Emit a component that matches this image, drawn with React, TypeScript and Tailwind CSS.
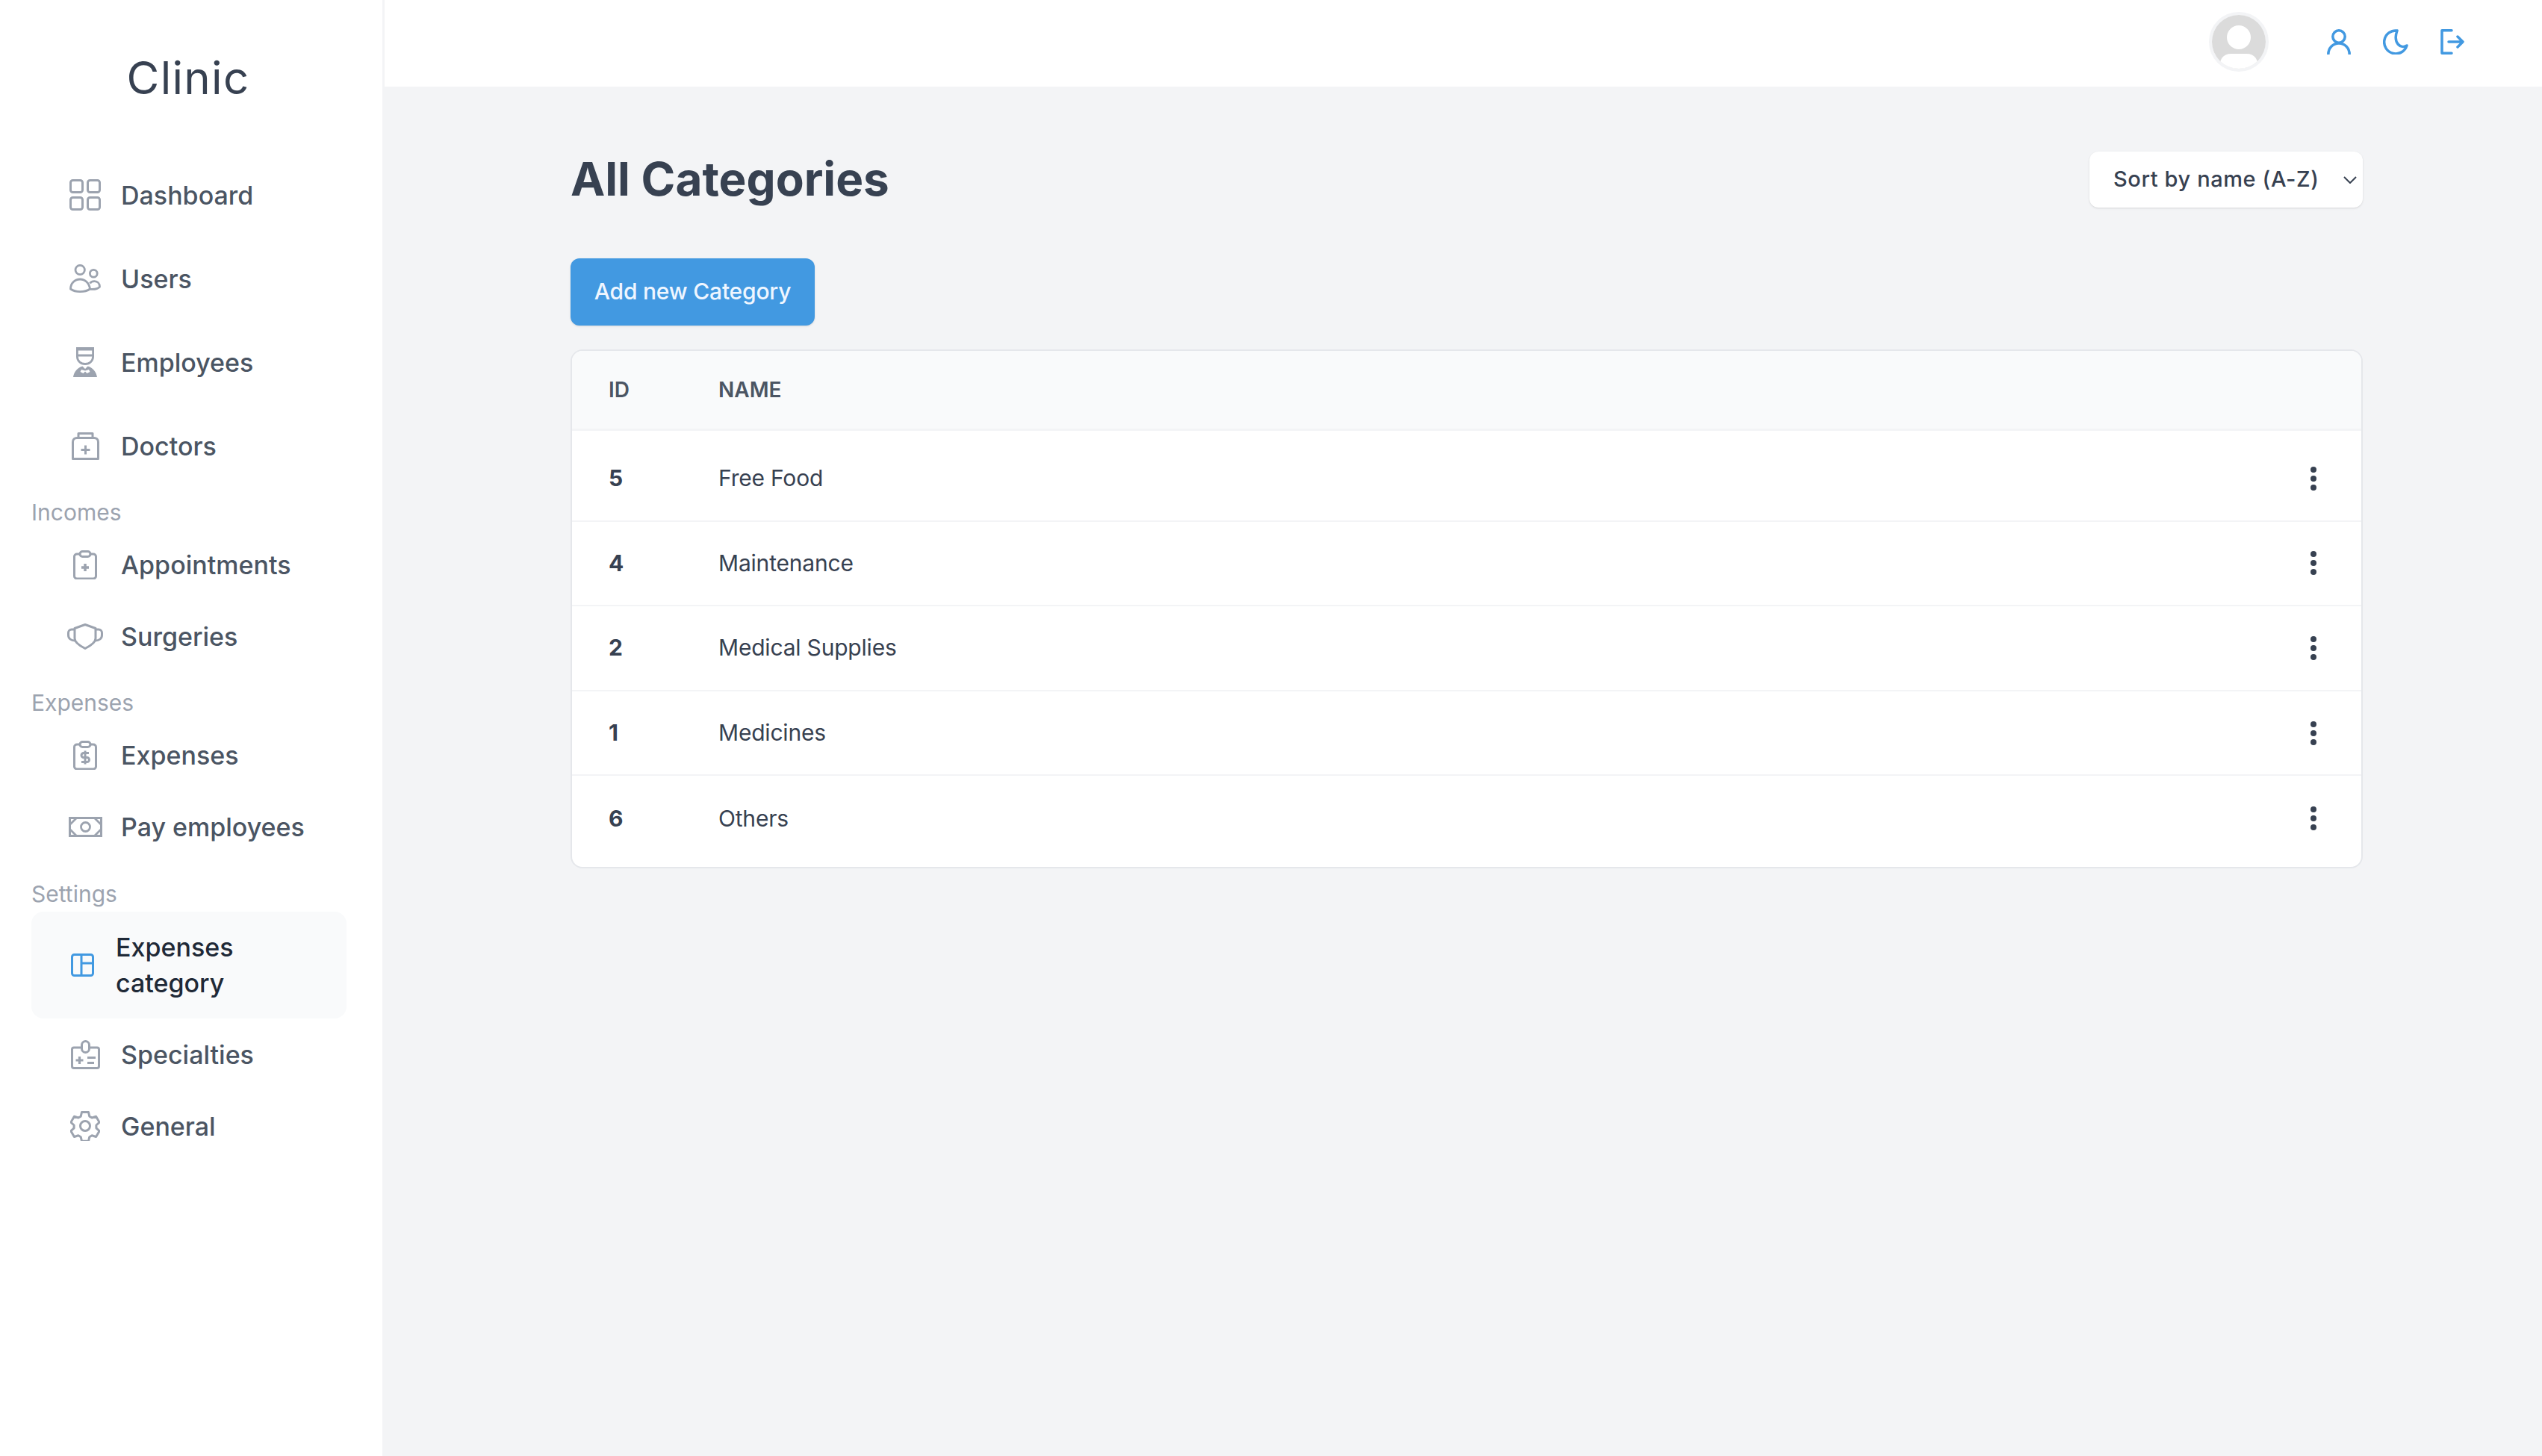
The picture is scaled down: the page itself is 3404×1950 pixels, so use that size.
import React from 'react';

type IconProps = { className?: string };

const GridIcon = ({ className }: IconProps) => (
  <svg viewBox="0 0 42 42" fill="none" stroke="currentColor" strokeWidth="3" className={className}>
    <rect x="1.500" y="1.500" width="16" height="16" rx="3" />
    <rect x="24.500" y="1.500" width="16" height="16" rx="3" />
    <rect x="1.500" y="24.500" width="16" height="16" rx="3" />
    <rect x="24.500" y="24.500" width="16" height="16" rx="3" />
  </svg>
);

const UsersIcon = ({ className }: IconProps) => (
  <svg viewBox="0 0 42 38" fill="none" stroke="currentColor" strokeWidth="2.800" strokeLinejoin="round" className={className}>
    <circle cx="14.200" cy="7.500" r="6.200" />
    <circle cx="32.300" cy="12.200" r="4.900" />
    <path d="M1.500 33c0-8 6-13 12.700-13S26.500 25 27.500 33c-3.500 2.500-8 3.600-13.300 3.600S5 35.500 1.500 33z" />
    <path d="M27.500 25.500c1-1.800 3.500-2.800 6-2.800 4 0 7 3 7 7.500-2.500 2.500-7.500 3.600-13 3" />
  </svg>
);

const NurseIcon = ({ className }: IconProps) => (
  <svg viewBox="0 0 32 40" className={className}>
    <path fill="currentColor" d="M4 0h24v4.500H4zM4 9.500h24v3H4z" />
    <path fill="none" stroke="currentColor" strokeWidth="2.800" d="M5.400 3v9.500c0 5.800 4.700 10 10.600 10s10.600-4.200 10.600-10V3" />
    <path fill="currentColor" d="M0 40c1-7 6-13 12.500-14.500L16 29l3.500-3.500C26 27 31 33 32 40zM9.500 33l4 2 2.500-2.500 2.500 2.500 4-2-1.500-3-5 1.500-5-1.500z" />
  </svg>
);

const BagIcon = ({ className }: IconProps) => (
  <svg viewBox="0 0 37 37" fill="none" stroke="currentColor" strokeWidth="3" strokeLinejoin="round" className={className}>
    <path d="M9 7.500V1.500h19v6" />
    <path d="M1.500 13c0-3.500 2.500-5.500 5.500-5.500h23c3 0 5.500 2 5.500 5.500v22.500h-34z" />
    <path d="M18.500 17.500v12M12.500 23.500h12" />
  </svg>
);

const ClipboardBase = () => (
  <>
    <path d="M9 5H5a3.500 3.500 0 0 0-3.500 3.500v26A3.500 3.500 0 0 0 5 38h22a3.500 3.500 0 0 0 3.500-3.500v-26A3.500 3.500 0 0 0 27 5h-4" />
    <rect x="9" y="1.500" width="14" height="7" rx="3.500" />
  </>
);

const ClipboardPlusIcon = ({ className }: IconProps) => (
  <svg viewBox="0 0 32 39" fill="none" stroke="currentColor" strokeWidth="3" strokeLinejoin="round" className={className}>
    <ClipboardBase />
    <path strokeWidth="3.500" d="M16 18v10M11 23h10" />
  </svg>
);

const MaskIcon = ({ className }: IconProps) => (
  <svg viewBox="0 0 48 35" fill="none" stroke="currentColor" strokeWidth="3" strokeLinejoin="round" className={className}>
    <path d="M10 6.500L24 1.500l14 5v13.500c0 5-7 10-14 13.500-7-3.500-14-8.500-14-13.500z" />
    <path d="M10 8H6a4.500 4.500 0 0 0-4.500 4.500v3C1.500 20 5 23 10.500 23" />
    <path d="M38 8h4a4.500 4.500 0 0 1 4.500 4.500v3c0 4.500-3.500 7.500-9 7.500" />
  </svg>
);

const ClipboardDollarIcon = ({ className }: IconProps) => (
  <svg viewBox="0 0 32 39" fill="none" stroke="currentColor" strokeWidth="3" strokeLinejoin="round" className={className}>
    <ClipboardBase />
    <path d="M21 16.500h-7a3 3 0 0 0 0 6h4.500a3 3 0 0 1 0 6H11M16 13.500v18" />
  </svg>
);

const MoneyIcon = ({ className }: IconProps) => (
  <svg viewBox="0 0 45 27" className={className}>
    <rect x="1.500" y="1.500" width="42" height="24" fill="none" stroke="currentColor" strokeWidth="3" />
    <circle cx="22.500" cy="13.500" r="6" fill="none" stroke="currentColor" strokeWidth="2.800" />
    <path fill="none" stroke="currentColor" strokeWidth="2.800" d="M10 2L2 10M35 2l8 8M10 25l-8-8M35 25l8-8" />
  </svg>
);

const LayoutIcon = ({ className }: IconProps) => (
  <svg viewBox="0 0 31 31" fill="none" stroke="currentColor" strokeWidth="3" className={className}>
    <rect x="1.500" y="1.500" width="28" height="28" rx="3" />
    <path d="M14 1.500v28M14 13h15.500" />
  </svg>
);

const BadgeIcon = ({ className }: IconProps) => (
  <svg viewBox="0 0 39 39" fill="none" stroke="currentColor" strokeWidth="3" strokeLinejoin="round" className={className}>
    <path d="M14.500 10H4A2.500 2.500 0 0 0 1.500 12.500V35A2.500 2.500 0 0 0 4 37.500h31A2.500 2.500 0 0 0 37.500 35V12.500A2.500 2.500 0 0 0 35 10H24.500" />
    <rect x="14.500" y="1.500" width="10" height="15" rx="5" />
    <path strokeWidth="3.200" d="M11.500 22v10M6.500 27h10M22 23.500h11M22 30.500h9" />
  </svg>
);

const GearIcon = ({ className }: IconProps) => (
  <svg viewBox="0 0 40 40" fill="none" stroke="currentColor" strokeWidth="3" strokeLinejoin="round" className={className}>
    <path d="M15.500 1.500h9l1.300 5.600 3.300 1.900 5.500-1.700 4.500 7.800-4.200 3.900v3.800l4.200 3.900-4.500 7.800-5.500-1.700-3.300 1.900-1.300 5.600h-9l-1.300-5.600-3.300-1.900-5.500 1.700-4.500-7.800 4.200-3.900v-3.800L.9 15.100l4.500-7.800 5.500 1.700 3.300-1.900z" />
    <circle cx="20" cy="20" r="6.500" />
  </svg>
);

type NavItem = { label: string; icon: React.FC<IconProps>; iconClass: string };

const topItems: NavItem[] = [
  { label: 'Dashboard', icon: GridIcon, iconClass: 'w-[42px] h-[42px]' },
  { label: 'Users', icon: UsersIcon, iconClass: 'w-[42px] h-[38px]' },
  { label: 'Employees', icon: NurseIcon, iconClass: 'w-[32px] h-[40px]' },
  { label: 'Doctors', icon: BagIcon, iconClass: 'w-[37px] h-[37px]' },
];

const incomeItems: NavItem[] = [
  { label: 'Appointments', icon: ClipboardPlusIcon, iconClass: 'w-[32px] h-[39px]' },
  { label: 'Surgeries', icon: MaskIcon, iconClass: 'w-[48px] h-[35px]' },
];

const expenseItems: NavItem[] = [
  { label: 'Expenses', icon: ClipboardDollarIcon, iconClass: 'w-[32px] h-[39px]' },
  { label: 'Pay employees', icon: MoneyIcon, iconClass: 'w-[45px] h-[27px]' },
];

const settingItems: NavItem[] = [
  { label: 'Specialties', icon: BadgeIcon, iconClass: 'w-[39px] h-[39px]' },
  { label: 'General', icon: GearIcon, iconClass: 'w-[40px] h-[40px]' },
];

const categories = [
  { id: 5, name: 'Free Food' },
  { id: 4, name: 'Maintenance' },
  { id: 2, name: 'Medical Supplies' },
  { id: 1, name: 'Medicines' },
  { id: 6, name: 'Others' },
];

const NavRow: React.FC<{ item: NavItem; height: string }> = ({ item, height }) => {
  const Icon = item.icon;
  return (
    <a className={`flex items-center pl-[74px] ${height}`}>
      <span className="flex w-[80px] justify-center text-[#9ca3af]">
        <Icon className={item.iconClass} />
      </span>
      <span className="ml-[8px] text-[34px] font-medium text-[#4b5563]">{item.label}</span>
    </a>
  );
};

const SectionLabel: React.FC<{ children: React.ReactNode }> = ({ children }) => (
  <div className="h-[46px] pl-[42px] text-[30px] leading-[48px] text-[#9ca3af]">{children}</div>
);

const Sidebar = () => (
  <aside className="flex w-[515px] shrink-0 flex-col border-r-[3px] border-[#f3f4f6] bg-white">
    <div className="flex h-[205px] justify-center pt-[68px] pr-[8px] text-[60px] leading-[72px] tracking-[1.3px] text-[#374151]">Clinic</div>
    <nav className="flex flex-col">
      {topItems.map((item) => (
        <NavRow key={item.label} item={item} height="h-[112px]" />
      ))}
      <div className="mt-[9px]">
        <SectionLabel>Incomes</SectionLabel>
      </div>
      {incomeItems.map((item) => (
        <NavRow key={item.label} item={item} height="h-[96px]" />
      ))}
      <div className="mt-[17px]">
        <SectionLabel>Expenses</SectionLabel>
      </div>
      {expenseItems.map((item) => (
        <NavRow key={item.label} item={item} height="h-[96px]" />
      ))}
      <div className="mt-[18px]">
        <SectionLabel>Settings</SectionLabel>
      </div>
      <a className="mt-[2px] ml-[42px] flex h-[143px] w-[422px] items-center rounded-[16px] bg-[#f9fafb] pl-[53px]">
        <LayoutIcon className="h-[31px] w-[31px] text-[#4299e1]" />
        <span className="ml-[29px] w-[220px] text-[34px] leading-[48px] font-medium text-[#1f2937]">Expenses category</span>
      </a>
      {settingItems.map((item) => (
        <NavRow key={item.label} item={item} height="h-[96px]" />
      ))}
    </nav>
  </aside>
);

const Avatar = () => (
  <div className="h-[80px] w-[80px] rounded-full border-[4px] border-[#f3f4f6]">
    <svg viewBox="0 0 72 72" className="h-full w-full">
      <defs>
        <clipPath id="avatar-clip">
          <circle cx="36" cy="36" r="36" />
        </clipPath>
      </defs>
      <g clipPath="url(#avatar-clip)">
        <rect width="72" height="72" fill="#dbdbdb" />
        <circle cx="36" cy="30" r="16" fill="#fff" />
        <path d="M10 72c0-12 4-20 16-20h20c12 0 16 8 16 20z" fill="#fff" />
      </g>
    </svg>
  </div>
);

const Header = () => (
  <header className="flex h-[116px] items-center justify-end bg-white pr-[104px] pb-[4px]">
    <Avatar />
    <div className="ml-[78px] flex items-center gap-[43px] text-[#4299e1]">
      <svg viewBox="0 0 32 34" fill="none" stroke="currentColor" strokeWidth="3.500" className="h-[34px] w-[32px]">
        <circle cx="16" cy="10" r="8.200" />
        <path d="M1.800 34c0-8.500 6.200-15 14.200-15s14.200 6.500 14.200 15" />
      </svg>
      <svg viewBox="0 0 34 34" fill="none" stroke="currentColor" strokeWidth="3.500" strokeLinejoin="round" className="h-[34px] w-[34px]">
        <path d="M19 2A15.500 15.500 0 1 0 32 22c-8 5-19-3-13-20z" />
      </svg>
      <svg viewBox="0 0 32 34" fill="none" stroke="currentColor" strokeWidth="3.500" strokeLinecap="round" strokeLinejoin="round" className="h-[34px] w-[32px]">
        <path d="M15 1.800H2v30.400h13" />
        <path d="M11 17h19M23 10l7 7-7 7" />
      </svg>
    </div>
  </header>
);

const DotsIcon = () => (
  <svg viewBox="0 0 8 32" className="h-[32px] w-[8px] text-[#374151]" fill="currentColor">
    <circle cx="4" cy="4" r="4" />
    <circle cx="4" cy="16" r="4" />
    <circle cx="4" cy="28" r="4" />
  </svg>
);

export default function App() {
  return (
    <div className="flex min-h-[1950px] bg-[#f3f4f6] font-['Inter','Liberation_Sans',sans-serif]">
      <Sidebar />
      <div className="flex min-w-0 flex-1 flex-col">
        <Header />
        <main className="pr-[240px] pl-[249px]">
          {/* Title + sort */}
          <div className="mt-[87px] flex h-[75px] items-center justify-between">
            <h1 className="mt-[-3px] text-[62px] font-bold text-[#374151]">All Categories</h1>
            <div className="flex h-[75px] w-[366px] items-center justify-between rounded-[12px] bg-white pr-[8px] pl-[32px] shadow-sm">
              <span className="pb-[2px] text-[29px] font-medium tracking-[0.6px] text-[#374151]">Sort by name (A-Z)</span>
              <svg viewBox="0 0 18 10" fill="none" stroke="#374151" strokeWidth="2" className="h-[10px] w-[18px]">
                <path d="M1 1l8 8 8-8" />
              </svg>
            </div>
          </div>

          <button className="mt-[68px] block h-[90px] w-[327px] rounded-[12px] bg-[#4299e1] pb-[2px] text-[30px] font-medium tracking-[-0.2px] text-[#eff6ff] shadow-sm">Add new Category</button>

          {/* Table */}
          <div className="mt-[32px] overflow-hidden rounded-[16px] border-[2px] border-[#e5e7eb] bg-white">
            <div className="flex h-[107px] items-center border-b-[3px] border-[#f3f4f6] bg-[#f9fafb] text-[28px] font-semibold text-[#4b5563]">
              <div className="w-[196px] pl-[49px]">ID</div>
              <div>NAME</div>
            </div>
            <div className="flex flex-col divide-y-[2px] divide-[#f3f4f6] py-[8px]">
              {categories.map((c) => (
                <div key={c.id} className="flex h-[113.6px] items-center text-[30px] text-[#374151]">
                  <div className="w-[196px] pl-[49px] font-bold">{c.id}</div>
                  <div className="flex-1 tracking-[-0.2px]">{c.name}</div>
                  <div className="pr-[60px]">
                    <DotsIcon />
                  </div>
                </div>
              ))}
            </div>
          </div>
        </main>
      </div>
    </div>
  );
}
